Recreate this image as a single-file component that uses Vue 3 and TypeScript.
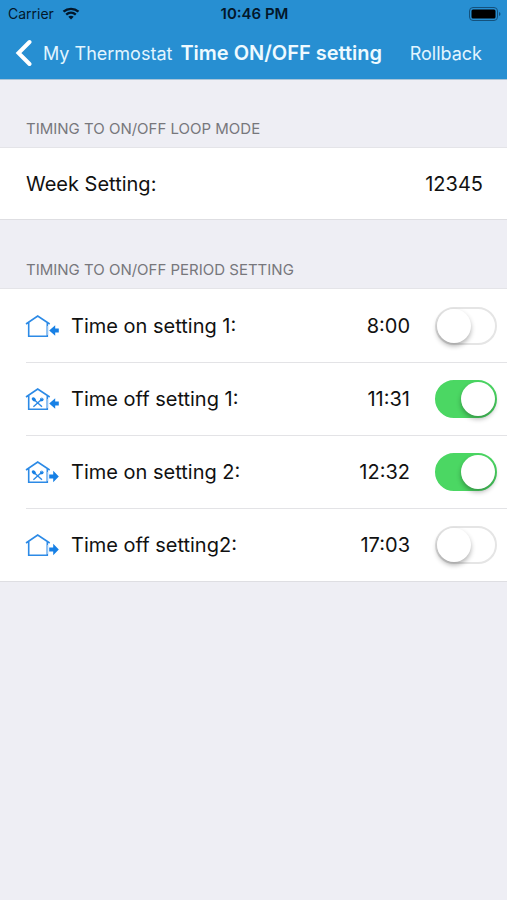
<script setup lang="ts">
import { ref } from 'vue'

interface Period {
  id: string
  label: string
  time: string
  enabled: boolean
  arrow: 'in' | 'out'
  meal: boolean
}

const week = ref('12345')

const periods = ref<Period[]>([
  { id: 'on-1', label: 'Time on setting 1:', time: '8:00', enabled: false, arrow: 'in', meal: false },
  { id: 'off-1', label: 'Time off setting 1:', time: '11:31', enabled: true, arrow: 'in', meal: true },
  { id: 'on-2', label: 'Time on setting 2:', time: '12:32', enabled: true, arrow: 'out', meal: true },
  { id: 'off-2', label: 'Time off setting2:', time: '17:03', enabled: false, arrow: 'out', meal: false },
])
</script>

<template>
  <div class="screen">
    <header class="top">
      <div class="status">
        <div class="carrier">
          <span>Carrier</span>
          <svg class="wifi" viewBox="0 0 18 13" aria-hidden="true">
            <path d="M1.5 4.7C5.8.9 12.2.9 16.5 4.7" />
            <path d="M4.2 7.6C7 5.2 11 5.2 13.8 7.6" />
            <path class="dot" d="M6.3 9.8C7.8 8.5 10.2 8.5 11.7 9.8L9 12.6Z" />
          </svg>
        </div>
        <span class="clock">10:46 PM</span>
        <svg class="battery" viewBox="0 0 32 14" aria-hidden="true">
          <rect class="case" x="0.5" y="0.5" width="28" height="13" rx="3.5" />
          <rect x="2.5" y="2.5" width="24" height="9" rx="1.5" />
          <path class="tip" d="M30 5Q31.5 5.6 31.5 7T30 9Z" />
        </svg>
      </div>
      <nav class="nav">
        <button class="back" type="button">
          <svg class="chevron" viewBox="0 0 17 28" aria-hidden="true">
            <path d="M14.5 3L3.5 14L14.5 25" />
          </svg>
          <span>My Thermostat</span>
        </button>
        <h1 class="title">Time ON/OFF setting</h1>
        <button class="rollback" type="button">Rollback</button>
      </nav>
    </header>

    <main>
      <section>
        <h2 class="heading">TIMING TO ON/OFF LOOP MODE</h2>
        <div class="group">
          <button class="row week" type="button">
            <span class="label">Week Setting:</span>
            <span>{{ week }}</span>
          </button>
        </div>
      </section>

      <section>
        <h2 class="heading">TIMING TO ON/OFF PERIOD SETTING</h2>
        <ul class="group">
          <li v-for="period in periods" :key="period.id" class="row period">
            <svg class="house" viewBox="0 0 34 24" aria-hidden="true">
              <path class="line" d="M1 10L12.7 2L24.7 10M3.7 8.5V22.2H22.3V8.5" />
              <g v-if="period.meal">
                <path class="utensil" d="M9.2 12.7L17 19.7M16.2 12.7L8.4 19.7" />
                <ellipse cx="8.8" cy="12.3" rx="2.3" ry="1.7" transform="rotate(42 8.8 12.3)" />
                <path d="M15 11.8L16.6 10.2L16.5 12L18 10.4L17.8 12.5L19.2 11.3L18 14L15.6 14.5Z" />
              </g>
              <path class="gap" d="M22.3 12V21" />
              <path v-if="period.arrow === 'in'" d="M24.2 16.5L30.2 11.2V14.6H33.8V18.4H30.2V21.8Z" />
              <path v-else d="M33.8 16.5L28.2 10.8V14.6H24.2V18.4H28.2V22.2Z" />
            </svg>
            <label class="label" :for="period.id">{{ period.label }}</label>
            <span class="time">{{ period.time }}</span>
            <input :id="period.id" v-model="period.enabled" class="switch" type="checkbox" role="switch" />
          </li>
        </ul>
      </section>
    </main>
  </div>
</template>

<style>
body {
  margin: 0;
  background: #eeeef4;
}
</style>

<style scoped>
.screen {
  min-height: 100vh;
  background: #eeeef4;
  color: #111;
  font-family: Inter, "Liberation Sans", sans-serif;
  font-size: 20px;
}

button {
  border: 0;
  padding: 0;
  background: none;
  color: inherit;
  font: inherit;
  cursor: pointer;
}

.top {
  background: #278fd2;
  border-bottom: 1px solid #a9c5d9;
}

.status {
  display: grid;
  grid-template-columns: 1fr auto 1fr;
  align-items: center;
  height: 27px;
  padding: 0 6px 0 8px;
  color: #03172a;
  font-size: 14px;
}

.carrier {
  display: flex;
  align-items: center;
  gap: 8px;
}

.wifi {
  width: 18px;
  height: 13px;
  fill: none;
  stroke: currentColor;
  stroke-width: 2.4;
}

.wifi .dot {
  fill: currentColor;
  stroke: none;
}

.clock {
  font-size: 15px;
  font-weight: 600;
}

.battery {
  justify-self: end;
  width: 32px;
  height: 14px;
  fill: #000;
}

.battery .case {
  fill: none;
  stroke: #14517c;
}

.battery .tip {
  fill: #14517c;
}

.nav {
  display: flex;
  align-items: center;
  height: 52px;
  padding: 0 25px 0 15px;
  color: #e2f5ff;
  font-size: 18px;
  white-space: nowrap;
}

.back {
  display: flex;
  align-items: center;
  gap: 11px;
}

.chevron {
  width: 17px;
  height: 28px;
  fill: none;
  stroke: #fff;
  stroke-width: 4;
  stroke-linecap: round;
}

.title {
  margin: 0 0 0 8px;
  color: #eefaff;
  font-size: 20px;
  font-weight: 600;
}

.rollback {
  margin-left: auto;
}

.heading {
  box-sizing: border-box;
  height: 68px;
  margin: 0;
  padding: 40px 26px 0;
  color: #77777c;
  font-size: 15px;
  font-weight: 400;
  line-height: 20px;
}

section:first-child .heading {
  height: 67px;
  padding-top: 39px;
}

.group {
  margin: 0;
  padding: 0;
  border-top: 1px solid #e4e4e8;
  border-bottom: 1px solid #dedee2;
  background: #fff;
  list-style: none;
}

.row {
  display: flex;
  align-items: center;
  box-sizing: border-box;
  width: 100%;
}

.week {
  height: 71px;
  padding: 0 24px 0 26px;
  text-align: left;
}

.label {
  flex: 1;
}

.period {
  position: relative;
  height: 73px;
  padding: 0 10px 0 25px;
}

.period + .period::before {
  content: "";
  position: absolute;
  top: 0;
  left: 26px;
  right: 0;
  height: 1px;
  background: #e3e3e6;
}

.house {
  width: 34px;
  height: 24px;
  margin-right: 12px;
  fill: #1780e5;
}

.house .line,
.house .utensil {
  fill: none;
  stroke: #2c8ae6;
  stroke-width: 1.6;
}

.house .utensil {
  stroke-width: 1.4;
}

.house .gap {
  stroke: #8fc0f2;
  stroke-width: 1.6;
}

.time {
  margin-right: 25px;
}

.switch {
  appearance: none;
  display: flex;
  align-items: center;
  box-sizing: border-box;
  width: 62px;
  height: 38px;
  margin: 0;
  border: 2px solid #e5e5e5;
  border-radius: 19px;
  background: #fff;
  cursor: pointer;
}

.switch::before {
  content: "";
  width: 34px;
  height: 34px;
  border-radius: 50%;
  background: #fff;
  box-shadow: 0 3px 5px rgba(0, 0, 0, 0.3);
}

.switch:checked {
  justify-content: flex-end;
  border-color: #4bd763;
  background: #4bd763;
}
</style>
